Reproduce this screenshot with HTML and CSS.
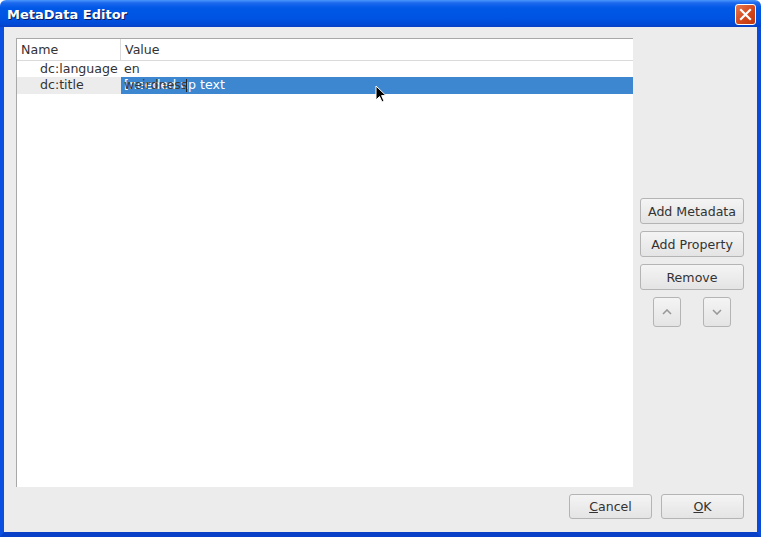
FILE: index.html
```html
<!DOCTYPE html>
<html>
<head>
<meta charset="utf-8">
<link rel="stylesheet" href="styles.css">
</head>
<body>
<div class="window">
  <div class="titlebar">
    <span class="title">MetaData Editor</span>
    <span class="close">
      <svg width="13" height="13" viewBox="0 0 13 13"><path d="M2 2 L11 11 M11 2 L2 11" stroke="#fff" stroke-width="2.2" stroke-linecap="square"/></svg>
    </span>
  </div>
  <div class="frame">
    <div class="content">
      <div class="top">
        <div class="table">
          <div class="thead">
            <div class="th c1">Name</div>
            <div class="th c2">Value</div>
          </div>
          <div class="row">
            <div class="td c1">dc:language</div>
            <div class="td c2">en</div>
          </div>
          <div class="row row2">
            <div class="td c1 shaded">dc:title</div>
            <div class="td c2 editor"><span class="over">[needed up text</span><span class="under">weirdness</span><span class="caret"></span></div>
          </div>
        </div>
        <div class="side">
          <button class="btn wide">Add Metadata</button>
          <button class="btn wide">Add Property</button>
          <button class="btn wide">Remove</button>
          <div class="arrows">
            <button class="btn sq"><svg width="10" height="6" viewBox="0 0 10 6"><path d="M1 5 L5 1 L9 5" fill="none" stroke="#999" stroke-width="1.6"/></svg></button>
            <button class="btn sq"><svg width="10" height="6" viewBox="0 0 10 6"><path d="M1 1 L5 5 L9 1" fill="none" stroke="#999" stroke-width="1.6"/></svg></button>
          </div>
        </div>
      </div>
      <div class="bottom">
        <button class="btn dlg"><u>C</u>ancel</button>
        <button class="btn dlg"><u>O</u>K</button>
      </div>
    </div>
  </div>
  <svg class="cursor" width="14" height="20" viewBox="0 0 14 20"><path d="M1 1 L1 15 L4.5 11.5 L7 17 L9 16 L6.6 10.6 L11 10.6 Z" fill="#000" stroke="#fff" stroke-width="1"/></svg>
</div>
</body>
</html>
```
FILE: styles.css
```css
* { box-sizing: border-box; }
html, body { margin: 0; padding: 0; }
body {
  width: 761px;
  height: 537px;
  font-family: "DejaVu Sans", sans-serif;
  font-size: 12.6px;
  color: #333;
  overflow: hidden;
}
.window {
  position: relative;
  width: 761px;
  height: 537px;
  display: flex;
  flex-direction: column;
}
.titlebar {
  height: 27px;
  background: linear-gradient(to bottom, #4a96fb 0px, #1c68ee 3px, #0058e6 8px, #0054e3 18px, #004ad6 24px, #0a40c4 27px);
  display: flex;
  align-items: center;
  justify-content: space-between;
  padding: 0 5px 0 7px;
  border-radius: 6px 6px 0 0;
}
.title {
  color: #fff;
  font-weight: bold;
  font-size: 13px;
  text-shadow: 1px 1px 0 #0a1a60;
  padding-top: 1px;
}
.close {
  width: 21px;
  height: 21px;
  border: 1px solid #fff;
  border-radius: 3px;
  background: linear-gradient(135deg, #e8794f 0%, #d4471c 55%, #c0360e 100%);
  display: flex;
  align-items: center;
  justify-content: center;
  margin-top: 1px;
}
.frame {
  flex: 1;
  display: flex;
  border-left: 4px solid #0a4fe0;
  border-right: 5px solid #0a4ad8;
  border-bottom: 5px solid #0840c8;
}
.content {
  flex: 1;
  background: #ececec;
  padding: 11px 13px 13px 12px;
  display: flex;
  flex-direction: column;
}
.top {
  flex: 1;
  display: flex;
  gap: 7px;
}
.table {
  width: 617px;
  background: #fff;
  border-left: 1px solid #a8a8a8;
  border-top: 1px solid #a8a8a8;
}
.thead {
  height: 22px;
  display: flex;
  border-bottom: 1px solid #dadada;
}
.th {
  line-height: 22px;
  padding-left: 4px;
}
.c1 { width: 104px; flex: none; }
.c2 { flex: 1; }
.thead .c1 { border-right: 1px solid #dadada; }
.row {
  display: flex;
  height: 16px;
  line-height: 15px;
}
.row2 { height: 17px; line-height: 15px; }
.td.c1 { padding-left: 23px; }
.td.c2 { padding-left: 3px; }
.shaded { background: #ececec; }
.editor {
  background: #3d86d0;
  position: relative;
  white-space: nowrap;
}
.over {
  color: #fff;
}
.under {
  position: absolute;
  left: 3px;
  top: 0;
  color: #3a3a3a;
}
.caret {
  position: absolute;
  left: 65px;
  top: 2px;
  width: 1px;
  height: 13px;
  background: #222;
}
.side {
  width: 104px;
  display: flex;
  flex-direction: column;
  justify-content: center;
  gap: 7px;
}
.btn {
  font-family: "DejaVu Sans", sans-serif;
  font-size: 12.6px;
  color: #333;
  background: linear-gradient(to bottom, #f4f4f4, #e4e4e4);
  border: 1px solid #b4b4b4;
  border-radius: 3px;
  padding: 0;
  margin: 0;
}
.wide { height: 26px; width: 104px; }
.arrows {
  display: flex;
  justify-content: space-between;
  padding: 0 13px;
}
.sq {
  width: 28px;
  height: 30px;
  display: flex;
  align-items: center;
  justify-content: center;
}
.bottom {
  display: flex;
  justify-content: flex-end;
  gap: 9px;
  margin-top: 7px;
}
.dlg { width: 83px; height: 25px; }
.dlg u { text-decoration: underline; }
.cursor {
  position: absolute;
  left: 375px;
  top: 85px;
}
```
